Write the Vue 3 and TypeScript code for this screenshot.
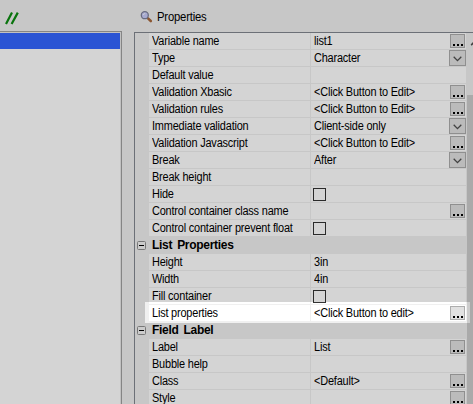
<script setup lang="ts">
type Editor = 'more' | 'select' | 'check'
interface Row {
  label: string
  value?: string
  editor?: Editor
  header?: boolean
}

const rows: Row[] = [
  { label: 'Variable name', value: 'list1', editor: 'more' },
  { label: 'Type', value: 'Character', editor: 'select' },
  { label: 'Default value' },
  { label: 'Validation Xbasic', value: '<Click Button to Edit>', editor: 'more' },
  { label: 'Validation rules', value: '<Click Button to Edit>', editor: 'more' },
  { label: 'Immediate validation', value: 'Client-side only', editor: 'select' },
  { label: 'Validation Javascript', value: '<Click Button to Edit>', editor: 'more' },
  { label: 'Break', value: 'After', editor: 'select' },
  { label: 'Break height' },
  { label: 'Hide', editor: 'check' },
  { label: 'Control container class name', editor: 'more' },
  { label: 'Control container prevent float', editor: 'check' },
  { label: 'List Properties', header: true },
  { label: 'Height', value: '3in' },
  { label: 'Width', value: '4in' },
  { label: 'Fill container', editor: 'check' },
  { label: 'List properties', value: '<Click Button to edit>', editor: 'more' },
  { label: 'Field Label', header: true },
  { label: 'Label', value: 'List', editor: 'more' },
  { label: 'Bubble help' },
  { label: 'Class', value: '<Default>', editor: 'more' },
  { label: 'Style', editor: 'more' },
]
</script>

<template>
  <div class="window">
    <section class="left">
      <div class="toolbar">
        <svg class="slashes" width="16" height="14" viewBox="0 0 16 14">
          <path d="M1 12 L7 .6 M6.6 12 L12.8 .6" stroke="#0c8c10" stroke-width="2.2" fill="none" />
        </svg>
      </div>
      <div class="tree"><div class="selected"></div></div>
    </section>

    <section class="right">
      <div class="caption">
        <svg width="13" height="13" viewBox="0 0 13 13">
          <path d="M8 7.4 L10.8 10" stroke="#a8683c" stroke-width="2.6" stroke-linecap="round" />
          <circle cx="4.8" cy="4.2" r="3.5" fill="#c9cdfa" stroke="#7d819a" stroke-width="1.3" />
          <path d="M3.2 4 Q3.6 2.6 5.2 2.5" stroke="#f4f6ff" fill="none" />
        </svg>
        <span class="text title">Properties</span>
      </div>
      <div class="grid">
        <div class="rows">
          <div v-for="row in rows" :key="row.label" class="row" :class="{ header: row.header }">
            <div class="gutter">
              <svg v-if="row.header" width="9" height="9" viewBox="0 0 9 9">
                <rect x=".5" y=".5" width="8" height="8" rx="1" fill="#f5f5f5" stroke="#919191" />
                <path d="M2 4.5 H7" stroke="#000" />
              </svg>
            </div>
            <div class="name"><span class="text">{{ row.label }}</span></div>
            <div v-if="!row.header" class="value">
              <span v-if="row.value" class="text">{{ row.value }}</span>
              <span v-if="row.editor === 'check'" class="check"></span>
              <span v-if="row.editor === 'more'" class="more"><i></i><i></i><i></i></span>
              <span v-if="row.editor === 'select'" class="select">
                <svg width="9" height="6" viewBox="0 0 9 6">
                  <path d="M.7 .8 L4.5 4.6 L8.3 .8" stroke="#505050" stroke-width="1.3" fill="none" />
                </svg>
              </span>
            </div>
          </div>
        </div>
        <div class="scrollbar">
          <svg width="6" height="62" viewBox="0 0 6 62">
            <path d="M3.6 11.5 L7 8 L7 10.5 L4.6 12.8 Z" fill="#505050" />
          </svg>
          <div class="thumb"></div>
        </div>
      </div>
    </section>
    <div class="spotlight"></div>
  </div>
</template>

<style>
body {
  margin: 0;
  overflow: hidden;
}
</style>

<style scoped>
.window {
  position: relative;
  display: flex;
  gap: 12px;
  width: 473px;
  height: 404px;
  overflow: hidden;
  background: #f0f0f0;
  color: #000;
  font: 12px/16px 'Liberation Sans', Arial, sans-serif;
  letter-spacing: -0.2px;
  white-space: nowrap;
}
.text {
  display: inline-block;
  transform: scaleX(0.91);
  transform-origin: 0 0;
}
.left {
  display: flex;
  flex-direction: column;
  width: 122px;
}
.toolbar {
  height: 31px;
  padding: 12px 0 0 5px;
  box-sizing: border-box;
}
.slashes {
  display: block;
}
.tree {
  flex: 1;
  padding: 1px 1px 0 0;
  background: #ffffff;
  border-top: 1px solid #a0a0a0;
  border-right: 1px solid #a0a0a0;
  box-shadow: inset -1px 1px #e8e8e8;
}
.selected {
  height: 16px;
  background: #3366ff;
}
.right {
  flex: 1;
  display: flex;
  flex-direction: column;
}
.caption {
  display: flex;
  gap: 4px;
  height: 32px;
  padding: 11px 0 0 6px;
  box-sizing: border-box;
}
.caption .title {
  margin-top: -2px;
  transform: scaleX(0.94);
}
.grid {
  display: flex;
  height: 371px;
  border-top: 1px solid #828790;
  border-left: 1px solid #828790;
  overflow: hidden;
}
.rows {
  width: 331px;
}
.row {
  display: flex;
  height: 17px;
}
.gutter {
  width: 14px;
  padding: 4px 0 0 2px;
  box-sizing: border-box;
}
.gutter svg {
  display: block;
}
.name {
  width: 161px;
  height: 16px;
  padding-left: 3px;
  box-sizing: border-box;
  background: #fff;
}
.value {
  display: flex;
  flex: 1;
  height: 16px;
  margin-left: 1px;
  padding-left: 3px;
  background: #fff;
}
.header .name {
  background: transparent;
  font-weight: bold;
  letter-spacing: -0.3px;
  word-spacing: 2px;
}
.header .text {
  transform: none;
}
.check {
  width: 13px;
  height: 13px;
  margin: 2px 0 0 -1px;
  border: 1px solid #333;
  box-sizing: border-box;
}
.more {
  display: flex;
  gap: 2px;
  align-items: flex-end;
  justify-content: center;
  width: 15px;
  height: 14px;
  margin: 1px 1px 0 auto;
  padding-bottom: 1px;
  box-sizing: border-box;
  background: #e1e1e1;
  border: 1px solid #adadad;
}
.more i {
  width: 2px;
  height: 2px;
  background: #000;
}
.select {
  display: flex;
  align-items: center;
  justify-content: center;
  width: 17px;
  height: 16px;
  margin-left: auto;
  padding-top: 2px;
  box-sizing: border-box;
  background: #e1e1e1;
  border: 1px solid #adadad;
}
.scrollbar {
  display: flex;
  flex-direction: column;
  flex: 1;
  margin-left: 1px;
}
.scrollbar svg {
  display: block;
}
.thumb {
  flex: 1;
  background: #cdcdcd;
}
.spotlight {
  position: absolute;
  left: 145px;
  top: 302px;
  width: 325px;
  height: 21px;
  box-shadow: 0 0 0 500px rgba(0, 0, 0, 0.17);
}
</style>
